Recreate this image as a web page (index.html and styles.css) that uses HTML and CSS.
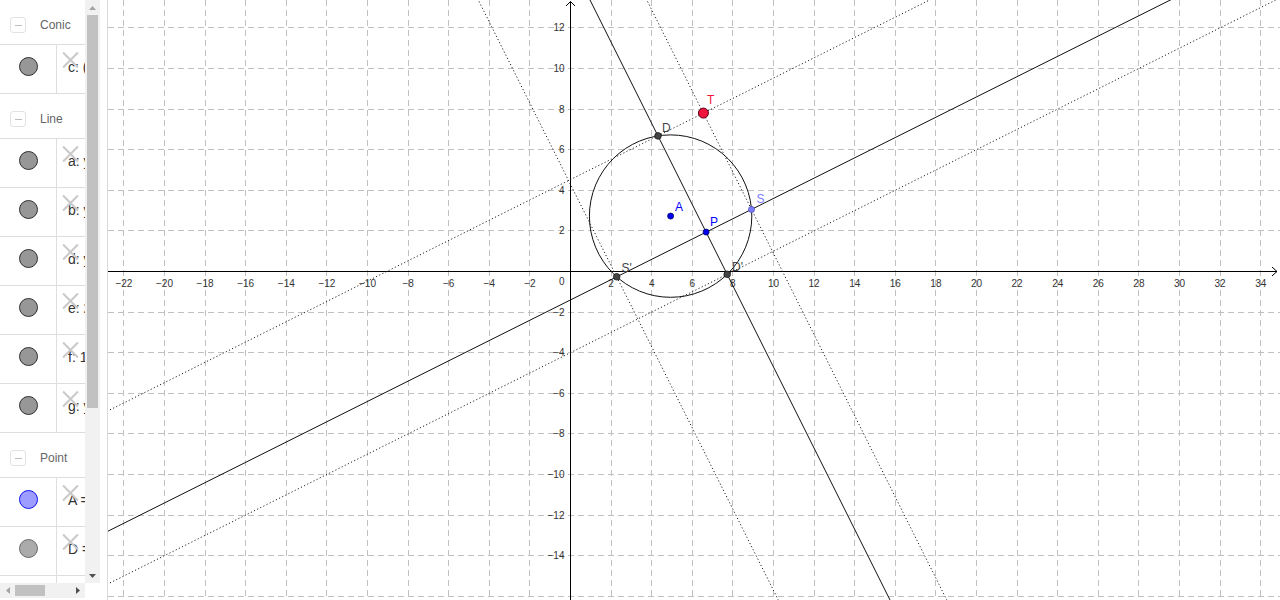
FILE: index.html
```html
<!DOCTYPE html>
<html lang="en">
<head>
<meta charset="utf-8">
<title>GeoGebra</title>
<link rel="stylesheet" href="styles.css">
</head>
<body>
<div class="app">
  <aside class="algebra">
    <div class="av">
      <div class="av-list">
        <div class="group"><span class="toggle"><span class="minus"></span></span><span class="group-name">Conic</span></div>
        <div class="item"><div class="marble-cell"><span class="marble"></span></div><div class="item-body"><span class="del"></span><span class="def">c: (x − 4.93)² + (y − 2.73)² = 16</span></div></div>

        <div class="group"><span class="toggle"><span class="minus"></span></span><span class="group-name">Line</span></div>
        <div class="item"><div class="marble-cell"><span class="marble"></span></div><div class="item-body"><span class="del"></span><span class="def">a: y = 0.5x − 1.4</span></div></div>
        <div class="item"><div class="marble-cell"><span class="marble"></span></div><div class="item-body"><span class="del"></span><span class="def">b: y = 0.5x + 4.53</span></div></div>
        <div class="item"><div class="marble-cell"><span class="marble"></span></div><div class="item-body"><span class="del"></span><span class="def">d: y = 0.5x − 4</span></div></div>
        <div class="item"><div class="marble-cell"><span class="marble"></span></div><div class="item-body"><span class="del"></span><span class="def">e: 2x + y = 15.3</span></div></div>
        <div class="item"><div class="marble-cell"><span class="marble"></span></div><div class="item-body"><span class="del"></span><span class="def">f: 10x + 5y = 104.45</span></div></div>
        <div class="item"><div class="marble-cell"><span class="marble"></span></div><div class="item-body"><span class="del"></span><span class="def">g: y = −2x + 4.29</span></div></div>

        <div class="group"><span class="toggle"><span class="minus"></span></span><span class="group-name">Point</span></div>
        <div class="item"><div class="marble-cell"><span class="marble marble-blue"></span></div><div class="item-body"><span class="del"></span><span class="def">A = (4.93, 2.73)</span></div></div>
        <div class="item"><div class="marble-cell"><span class="marble marble-light"></span></div><div class="item-body"><span class="del"></span><span class="def">D = (4.31, 6.68)</span></div></div>
        <div class="item"><div class="marble-cell"><span class="marble marble-light"></span></div><div class="item-body"><span class="del"></span><span class="def">D' = (7.72, −0.14)</span></div></div>
      </div>

      <div class="vbar">
        <div class="sb-btn"><svg width="7" height="4" viewBox="0 0 7 4"><polygon points="0,4 3.5,0 7,4" class="arrow-off"/></svg></div>
        <div class="vtrack"><div class="vthumb"></div></div>
        <div class="sb-btn"><svg width="7" height="4" viewBox="0 0 7 4"><polygon points="0,0 7,0 3.5,4" class="arrow-on"/></svg></div>
      </div>

      <div class="hbar">
        <div class="sb-btn"><svg width="4" height="7" viewBox="0 0 4 7"><polygon points="4,0 4,7 0,3.5" class="arrow-off"/></svg></div>
        <div class="htrack"><div class="hthumb"></div></div>
        <div class="sb-btn"><svg width="4" height="7" viewBox="0 0 4 7"><polygon points="0,0 4,3.5 0,7" class="arrow-on"/></svg></div>
      </div>
      <div class="corner"></div>
    </div>
  </aside>

  <main class="graphics">
    <svg class="canvas" width="1172" height="600" viewBox="108 0 1172 600">
      <g class="grid">
        <path d="M123.5 0V600M164.5 0V600M205.5 0V600M245.5 0V600M286.5 0V600M326.5 0V600M367.5 0V600M408.5 0V600M448.5 0V600M489.5 0V600M529.5 0V600M611.5 0V600M651.5 0V600M692.5 0V600M732.5 0V600M773.5 0V600M814.5 0V600M854.5 0V600M895.5 0V600M935.5 0V600M976.5 0V600M1017.5 0V600M1057.5 0V600M1098.5 0V600M1138.5 0V600M1179.5 0V600M1220.5 0V600M1260.5 0V600"/>
        <path d="M108 27.5H1280M108 68.5H1280M108 109.5H1280M108 149.5H1280M108 190.5H1280M108 230.5H1280M108 312.5H1280M108 352.5H1280M108 393.5H1280M108 433.5H1280M108 474.5H1280M108 515.5H1280M108 555.5H1280M108 596.5H1280"/>
      </g>

      <g class="axis">
        <path d="M108 271.5H1277M1272 267L1277 271.5L1272 276"/>
        <path d="M570.5 600V1.5M566 6L570.5 1.5L575 6"/>
      </g>

      <g class="ax-x">
        <text x="123.9" y="286.5">−22</text>
        <text x="164.5" y="286.5">−20</text>
        <text x="205.1" y="286.5">−18</text>
        <text x="245.7" y="286.5">−16</text>
        <text x="286.3" y="286.5">−14</text>
        <text x="326.9" y="286.5">−12</text>
        <text x="367.5" y="286.5">−10</text>
        <text x="408.1" y="286.5">−8</text>
        <text x="448.7" y="286.5">−6</text>
        <text x="489.3" y="286.5">−4</text>
        <text x="529.9" y="286.5">−2</text>
        <text x="611.1" y="286.5">2</text>
        <text x="651.7" y="286.5">4</text>
        <text x="692.3" y="286.5">6</text>
        <text x="732.9" y="286.5">8</text>
        <text x="773.5" y="286.5">10</text>
        <text x="814.1" y="286.5">12</text>
        <text x="854.7" y="286.5">14</text>
        <text x="895.3" y="286.5">16</text>
        <text x="935.9" y="286.5">18</text>
        <text x="976.5" y="286.5">20</text>
        <text x="1017.1" y="286.5">22</text>
        <text x="1057.7" y="286.5">24</text>
        <text x="1098.3" y="286.5">26</text>
        <text x="1138.9" y="286.5">28</text>
        <text x="1179.5" y="286.5">30</text>
        <text x="1220.1" y="286.5">32</text>
        <text x="1260.7" y="286.5">34</text>
      </g>
      <g class="ax-y">
        <text x="564.5" y="284.5">0</text>
        <text x="564.5" y="31.4">12</text>
        <text x="564.5" y="72">10</text>
        <text x="564.5" y="112.6">8</text>
        <text x="564.5" y="153.2">6</text>
        <text x="564.5" y="193.8">4</text>
        <text x="564.5" y="234.4">2</text>
        <text x="564.5" y="315.6">−2</text>
        <text x="564.5" y="356.2">−4</text>
        <text x="564.5" y="396.8">−6</text>
        <text x="564.5" y="437.4">−8</text>
        <text x="564.5" y="478">−10</text>
        <text x="564.5" y="518.6">−12</text>
        <text x="564.5" y="559.2">−14</text>
      </g>

      <g class="dotted">
        <line x1="63" y1="433.35" x2="1321.6" y2="-196"/>
        <line x1="63" y1="606.4" x2="1321.6" y2="-22.9"/>
        <line x1="630.3" y1="-33" x2="955.1" y2="616.6"/>
        <line x1="461.8" y1="-33" x2="786.6" y2="616.6"/>
      </g>

      <g class="solid">
        <line x1="63" y1="553.67" x2="1321.6" y2="-75.63"/>
        <line x1="573.5" y1="-33" x2="898.3" y2="616.6"/>
        <circle cx="670.6" cy="216.1" r="81.2"/>
      </g>

      <g class="points">
        <circle class="pt-dark" cx="658" cy="135.9" r="3.3"/>
        <circle class="pt-dark" cx="616.7" cy="276.8" r="3.3"/>
        <circle class="pt-dark" cx="727.2" cy="274.3" r="3.3"/>
        <circle class="pt-blue" cx="670.6" cy="216.1" r="3"/>
        <circle class="pt-blue" cx="706.1" cy="232.1" r="3"/>
        <circle class="pt-light" cx="751.5" cy="209.4" r="3"/>
        <circle class="pt-red" cx="703.4" cy="113.1" r="5"/>
      </g>

      <g class="labels">
        <text class="lb-blue" x="675" y="211">A</text>
        <text class="lb-blue" x="710" y="226">P</text>
        <text class="lb-light" x="756.5" y="203">S</text>
        <text class="lb-dark" x="662" y="131.5">D</text>
        <text class="lb-dark" x="621.5" y="271.5">S'</text>
        <text class="lb-dark" x="732" y="270.5">D'</text>
        <text class="lb-red" x="707" y="103.5">T</text>
      </g>
    </svg>
  </main>
</div>
</body>
</html>
```

FILE: styles.css
```css
* {
  box-sizing: border-box;
}

html,
body {
  margin: 0;
  height: 100%;
  background: #fff;
  overflow: hidden;
}

body {
  font-family: "Liberation Sans", Arial, sans-serif;
}

.app {
  display: flex;
  width: 1280px;
  height: 600px;
}

/* ---------- Algebra view ---------- */

.algebra {
  flex: none;
  width: 108px;
  height: 600px;
  border-right: 1px solid #dadada;
  background: #fff;
}

.av {
  display: grid;
  grid-template-columns: 85px 15px;
  grid-template-rows: 583px 15px;
}

.av-list {
  overflow: hidden;
}

.group {
  height: 45px;
  border-bottom: 1px solid #dedede;
  display: flex;
  align-items: center;
  padding: 6px 0 0 10px;
}

.toggle {
  width: 16px;
  height: 16px;
  border: 1px solid #e2e2e2;
  border-radius: 3px;
  display: flex;
  align-items: center;
  justify-content: center;
  background: #fff;
}

.minus {
  width: 7px;
  height: 1px;
  background: #bdbdbd;
}

.group-name {
  margin-left: 14px;
  font-size: 12px;
  color: #666;
}

.item {
  height: 49px;
  border-bottom: 1px solid #dedede;
  display: flex;
}

.marble-cell {
  flex: none;
  width: 57px;
  border-right: 1px solid #dedede;
  display: flex;
  justify-content: center;
  align-items: flex-start;
  padding-top: 12px;
}

.marble {
  width: 19px;
  height: 19px;
  border-radius: 50%;
  background: #979797;
  border: 1px solid #2e2e2e;
}

.marble-blue {
  background: #9d9dff;
  border-color: #1010f0;
}

.marble-light {
  background: #ababab;
  border-color: #6a6a6a;
}

.item-body {
  flex: 1;
  position: relative;
  padding: 14px 0 0 11px;
  white-space: nowrap;
  font-size: 14px;
  line-height: 16px;
  color: #333;
}

.del {
  position: absolute;
  left: 6px;
  top: 7px;
  width: 15px;
  height: 15px;
  z-index: 1;
}

.del::before,
.del::after {
  content: "";
  position: absolute;
  left: -3px;
  top: 6.5px;
  width: 21px;
  height: 2px;
  background: #c9c9c9;
  transform: rotate(45deg);
}

.del::after {
  transform: rotate(-45deg);
}

/* ---------- fake scrollbars ---------- */

.vbar {
  display: flex;
  flex-direction: column;
  background: #f1f1f1;
}

.sb-btn {
  flex: none;
  width: 15px;
  height: 15px;
  display: flex;
  align-items: center;
  justify-content: center;
}

.sb-btn svg {
  display: block;
}

.arrow-off {
  fill: #a3a3a3;
}

.arrow-on {
  fill: #505050;
}

.vtrack {
  flex: 1;
  padding: 0 2px;
}

.vthumb {
  height: 393px;
  background: #c1c1c1;
}

.hbar {
  display: flex;
  background: #f1f1f1;
}

.htrack {
  flex: 1;
  padding: 2px 0;
}

.hthumb {
  width: 30px;
  height: 100%;
  background: #c1c1c1;
}

.corner {
  background: #fff;
}

/* ---------- Graphics view ---------- */

.graphics {
  flex: 1;
  height: 600px;
  overflow: hidden;
}

.canvas {
  display: block;
}

.grid path {
  fill: none;
  stroke: #c0c0c0;
  stroke-width: 1;
  stroke-dasharray: 6 4;
}

.axis path {
  fill: none;
  stroke: #000;
  stroke-width: 1;
}

.ax-x text,
.ax-y text {
  font-family: "Liberation Sans", Arial, sans-serif;
  font-size: 10px;
  fill: #333;
}

.ax-x text {
  text-anchor: middle;
}

.ax-y text {
  text-anchor: end;
}

.dotted line {
  stroke: #222;
  stroke-width: 1;
  stroke-dasharray: 1.2 2.3;
}

.solid line,
.solid circle {
  fill: none;
  stroke: #111;
  stroke-width: 1;
}

.pt-dark {
  fill: #444;
  stroke: #1a1a1a;
  stroke-width: 0.8;
}

.pt-blue {
  fill: #0000ee;
  stroke: #000066;
  stroke-width: 0.8;
}

.pt-light {
  fill: #7d7dff;
  stroke: #4a4ac0;
  stroke-width: 0.8;
}

.pt-red {
  fill: #f0153c;
  stroke: #5a0010;
  stroke-width: 1;
}

.labels text {
  font-family: "Liberation Sans", Arial, sans-serif;
  font-size: 12px;
}

.lb-blue {
  fill: #0000ff;
}

.lb-light {
  fill: #7d7dff;
}

.lb-dark {
  fill: #444;
}

.lb-red {
  fill: #f0153c;
}
```
